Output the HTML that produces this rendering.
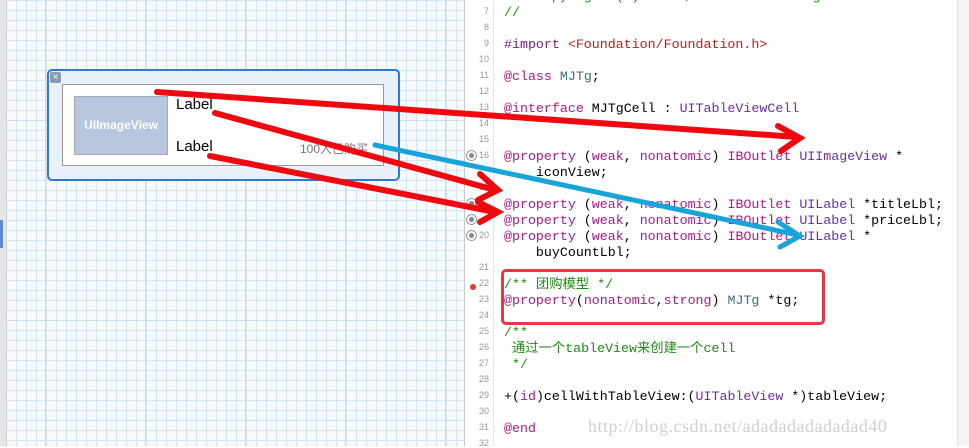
<!DOCTYPE html>
<html><head><meta charset="utf-8"><style>
body{margin:0;width:969px;height:446px;overflow:hidden;background:#fff;position:relative;font-family:"Liberation Sans",sans-serif}
#left{position:absolute;left:0;top:0;width:464px;height:446px;background-color:#f7fafd;
background-image:linear-gradient(to right,#cadcee 1px,transparent 1px),linear-gradient(to bottom,#cadcee 1px,transparent 1px),linear-gradient(to right,#d6e4f2 1px,transparent 1px),linear-gradient(to bottom,#d6e4f2 1px,transparent 1px);
background-size:100px 100px,100px 100px,10px 10px,10px 10px;background-position:45px 0,0 20px,6px 0,0 10px;border-right:1px solid #c8c8c8}
#lbar{position:absolute;left:0;top:0;width:6px;height:446px;background:#e6e6e6;border-right:1px solid #cfcfcf}
#gut{position:absolute;left:465px;top:0;width:28px;height:446px;background:#fff;border-right:1px solid #e4e4e4}
#code{position:absolute;left:504px;top:-11px;font-family:"Liberation Mono","Noto Sans CJK SC",monospace;font-size:13.3px;line-height:16px;color:#000;white-space:pre}
.ln{position:absolute;left:465px;width:24px;text-align:right;font-family:"Liberation Sans",sans-serif;font-size:9px;color:#999}
.g{color:#1e8a14}.p{color:#b0168c}.r{color:#c41a16}.t{color:#3f6e74}.pu{color:#6d2ea0}.b{color:#7e1e7e}
.cell{position:absolute;left:47px;top:69px;width:349px;height:108px;border:2px solid #2a7ad8;border-radius:5px;background:#eaf0f7}
.inner{position:absolute;left:62px;top:84px;width:320px;height:80px;background:#fff;border:1px solid #999}
.img{position:absolute;left:74px;top:96px;width:92px;height:57px;background:#b7c7e0;border:1px solid #a8a8a8;color:#fff;font-weight:bold;font-size:12px;text-align:center;line-height:57px}
.rad{position:absolute;left:466px;width:9px;height:9px;border-radius:50%;border:1px solid #999;background:radial-gradient(#888 35%,#fff 45%)}
</style></head><body>
<div id="left"></div><div id="lbar"></div>
<div style="position:absolute;left:0;top:220px;width:3px;height:28px;background:#5a8ad0"></div>
<div class="cell"></div>
<div style="position:absolute;left:50px;top:72px;width:11px;height:11px;background:#8a9ab0;border-radius:2px;color:#fff;font-size:10px;line-height:11px;text-align:center">×</div>
<div class="inner"></div>
<div class="img">UIImageView</div>
<div style="position:absolute;left:176px;top:96px;font-size:15px">Label</div>
<div style="position:absolute;left:176px;top:138px;font-size:15px">Label</div>
<div style="position:absolute;left:300px;top:140px;font-size:12px;color:#777;font-family:'Liberation Sans','Noto Sans CJK SC',sans-serif">100人已购买</div>
<div id="gut"></div>
<div class="ln" style="top:6px">7</div><div class="ln" style="top:22px">8</div><div class="ln" style="top:38px">9</div><div class="ln" style="top:54px">10</div><div class="ln" style="top:70px">11</div><div class="ln" style="top:86px">12</div><div class="ln" style="top:102px">13</div><div class="ln" style="top:118px">14</div><div class="ln" style="top:134px">15</div><div class="ln" style="top:150px">16</div><div class="ln" style="top:182px">17</div><div class="ln" style="top:230px">20</div><div class="ln" style="top:262px">21</div><div class="ln" style="top:278px">22</div><div class="ln" style="top:294px">23</div><div class="ln" style="top:310px">24</div><div class="ln" style="top:326px">25</div><div class="ln" style="top:342px">26</div><div class="ln" style="top:358px">27</div><div class="ln" style="top:374px">28</div><div class="ln" style="top:390px">29</div><div class="ln" style="top:406px">30</div><div class="ln" style="top:422px">31</div><div class="ln" style="top:438px">32</div>
<div class="rad" style="top:150px"></div><div class="rad" style="top:198px"></div><div class="rad" style="top:214px"></div><div class="rad" style="top:230px"></div>
<div id="code"><span class="g">//  Copyright (c) 2014年 itcast. All rights reserved.</span>
<span class="g">//</span>

<span class="b">#import</span> <span class="r">&lt;Foundation/Foundation.h&gt;</span>

<span class="p">@class</span> <span class="t">MJTg</span>;

<span class="p">@interface</span> MJTgCell : <span class="pu">UITableViewCell</span>


<span class="p">@property</span> (<span class="p">weak</span>, <span class="p">nonatomic</span>) <span class="p">IBOutlet</span> <span class="pu">UIImageView</span> *
    iconView;

<span class="p">@property</span> (<span class="p">weak</span>, <span class="p">nonatomic</span>) <span class="p">IBOutlet</span> <span class="pu">UILabel</span> *titleLbl;
<span class="p">@property</span> (<span class="p">weak</span>, <span class="p">nonatomic</span>) <span class="p">IBOutlet</span> <span class="pu">UILabel</span> *priceLbl;
<span class="p">@property</span> (<span class="p">weak</span>, <span class="p">nonatomic</span>) <span class="p">IBOutlet</span> <span class="pu">UILabel</span> *
    buyCountLbl;

<span class="g">/** 团购模型 */</span>
<span class="p">@property</span>(<span class="p">nonatomic</span>,<span class="p">strong</span>) <span class="t">MJTg</span> *tg;

<span class="g">/**
 通过一个tableView来创建一个cell
 */</span>

+(<span class="p">id</span>)cellWithTableView:(<span class="pu">UITableView</span> *)tableView;

<span class="p">@end</span></div>
<div style="position:absolute;left:501px;top:269px;width:318px;height:50px;border:3px solid #ee3344;border-radius:5px"></div>
<div style="position:absolute;left:470px;top:284px;width:6px;height:6px;border-radius:50%;background:#e33"></div>
<div style="position:absolute;left:957px;top:0;width:12px;height:446px;background:#f4f4f4;border-left:1px solid #e0e0e0"></div>
<div style="position:absolute;left:588px;top:416px;font-family:'Liberation Serif',serif;font-size:18px;color:#d0d0d0;letter-spacing:0.5px">http://blog.csdn.net/adadadadadadad40</div>
<svg width="969" height="446" style="position:absolute;left:0;top:0" fill="none" stroke-linecap="round">
<g stroke="#f00810" stroke-width="6">
<path d="M157 92 L797 137"/><path d="M778 126 L800 138 L781 151"/>
<path d="M215 113 L495 190"/><path d="M480 174 L498 190 L478 200"/>
<path d="M210 156 L495 212"/><path d="M478 202 L498 212 L480 222"/>
</g>
<g stroke="#18a4d8" stroke-width="5">
<path d="M375 145 L798 235"/><path d="M778 222 L800 236 L780 247"/>
</g>
</svg>
</body></html>
